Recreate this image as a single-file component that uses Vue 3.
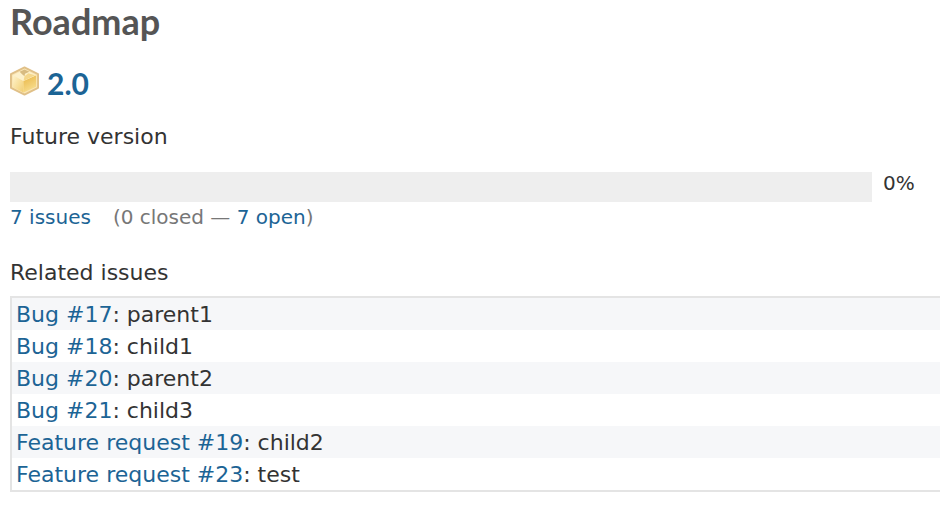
<script setup>
const version = { name: '2.0', description: 'Future version', percent: 0, total: 7, closed: 0, open: 7 }

const issues = [
  { id: 17, tracker: 'Bug', subject: 'parent1' },
  { id: 18, tracker: 'Bug', subject: 'child1' },
  { id: 20, tracker: 'Bug', subject: 'parent2' },
  { id: 21, tracker: 'Bug', subject: 'child3' },
  { id: 19, tracker: 'Feature request', subject: 'child2' },
  { id: 23, tracker: 'Feature request', subject: 'test' },
]
</script>

<template>
  <main class="roadmap">
    <h1>Roadmap</h1>
    <article>
      <h2>
        <svg class="package" viewBox="0 0 30 30" aria-hidden="true">
          <defs>
            <linearGradient id="box-left" x1="0" y1="0" x2="1" y2="1">
              <stop offset="0" stop-color="#fff3cc" />
              <stop offset="1" stop-color="#f1cd70" />
            </linearGradient>
            <linearGradient id="box-right" x1="0.2" y1="0" x2="0.6" y2="1">
              <stop offset="0" stop-color="#e9b748" />
              <stop offset="1" stop-color="#f9e093" />
            </linearGradient>
          </defs>
          <path d="M15 1 29 8V22L15 29 1 22V8Z" fill="#fae6b4" stroke="#e0c088" stroke-width="2" stroke-linejoin="round" />
          <path d="M3 9 14 15V27L3 21.5Z" fill="url(#box-left)" />
          <path d="M14 15 27 9V21L14 27Z" fill="url(#box-right)" />
          <path d="M3 9 15 3 27 9 14 15Z" fill="#fdf1cb" />
          <path d="M10 5.5 15 3 20 5.5 15.5 7.5 15 10 12.5 8Z" fill="#d8bb80" />
          <path d="M15 10 19 7 26 9 14 15Z" fill="#f5d78b" />
        </svg>
        <a href="#version">{{ version.name }}</a>
      </h2>
      <p class="description">{{ version.description }}</p>
      <div class="progress-row">
        <div class="progress" role="progressbar" aria-label="Progress" aria-valuemin="0" aria-valuemax="100" :aria-valuenow="version.percent">
          <div class="closed" :style="{ width: version.percent + '%' }"></div>
        </div>
        <span class="percent">{{ version.percent }}%</span>
      </div>
      <p class="summary">
        <a href="#issues">{{ version.total }} issues</a>
        <span class="counts">({{ version.closed }} closed — <a href="#open">{{ version.open }} open</a>)</span>
      </p>
      <table>
        <caption>Related issues</caption>
        <tbody>
          <tr v-for="issue in issues" :key="issue.id">
            <td><a :href="'#issue-' + issue.id">{{ issue.tracker }} #{{ issue.id }}</a>: {{ issue.subject }}</td>
          </tr>
        </tbody>
      </table>
    </article>
  </main>
</template>

<style>
body {
  margin: 0;
  background: #fff;
  overflow-x: hidden;
}
</style>

<style scoped>
.roadmap {
  padding-left: 10px;
  color: #333;
  font: 22px/32px Verdana, "DejaVu Sans", sans-serif;
}
a {
  color: #1c6495;
  text-decoration: none;
}
h1,
h2 {
  margin: 0;
  font-family: "Trebuchet MS", Lato, sans-serif;
  font-weight: 700;
}
h1 {
  color: #555;
  font-size: 36px;
  line-height: 42px;
}
h2 {
  display: flex;
  align-items: center;
  gap: 8px;
  margin-top: 22px;
  font-size: 30px;
  line-height: 38px;
}
.package {
  width: 29px;
  height: 30px;
  margin-bottom: 4px;
}
.description {
  margin: 19px 0;
}
.progress-row {
  display: flex;
  gap: 11px;
}
.progress {
  flex: 1;
  height: 30px;
  background: #eee;
}
.closed {
  height: 100%;
  background: #bae0ba;
}
.percent {
  width: 57px;
  font-size: 20px;
  line-height: 22px;
}
.summary {
  display: flex;
  gap: 22px;
  margin: 0;
  font-size: 20px;
  line-height: 30px;
}
.counts {
  color: #777;
}
table {
  width: calc(100% + 2px);
  margin-top: 25px;
  border-collapse: separate;
  border-spacing: 0;
  border: 2px solid #e4e4e4;
}
caption {
  padding-bottom: 7px;
  text-align: left;
}
td {
  padding: 1px 4px 0;
  line-height: 31px;
}
tr:nth-child(odd) {
  background: #f6f7f9;
}
</style>
